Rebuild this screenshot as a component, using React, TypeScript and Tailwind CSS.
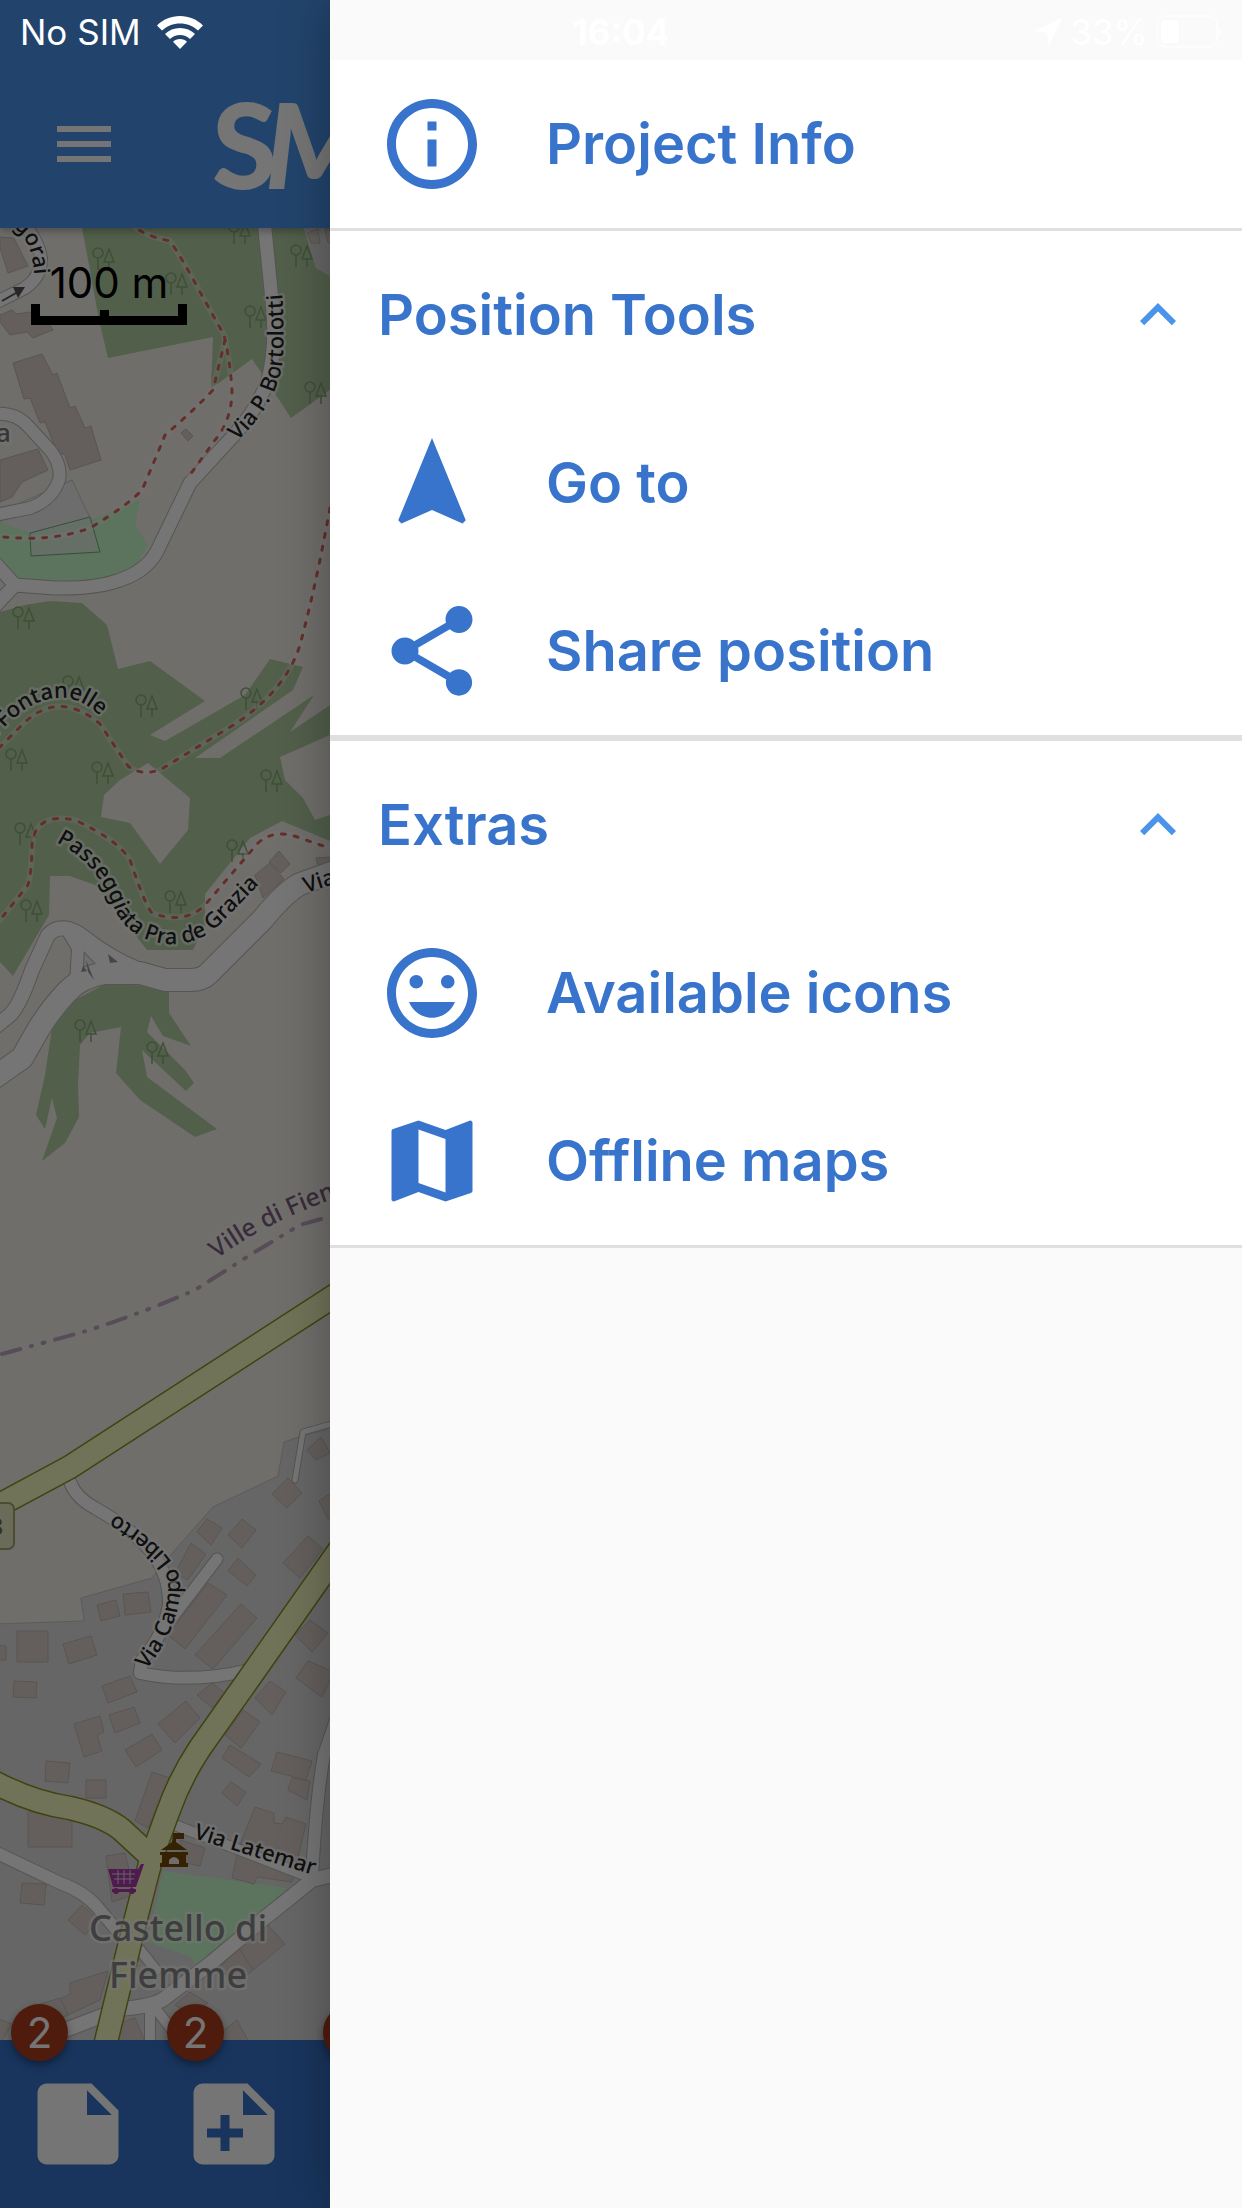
import { useState } from "react";
import type { ReactNode } from "react";
import type { IconType } from "react-icons";
import {
  MdExpandLess,
  MdExpandMore,
  MdInfoOutline,
  MdMap,
  MdMenu,
  MdMood,
  MdNavigation,
  MdShare,
} from "react-icons/md";

const forests = [
  "82,228 90,270 99,320 108,358 213,337 211,388 216,385 252,359 265,378 291,418 330,390 380,350 380,300 316,268 304,228",
  "0,612 25,605 50,601 82,603 107,625 118,669 150,661 205,701 150,735 165,741 245,695 270,659 303,667 293,690 195,758 220,758 314,695 290,732 330,705 330,735 280,757 285,780 303,798 315,820 330,815 330,841 282,821 250,838 205,894 205,925 193,950 147,950 125,922 95,885 70,876 50,876 49,915 13,976 0,962",
  "52,1028 75,1000 105,984 150,986 169,991 169,1013 191,1046 163,1036 151,1016 147,1032 185,1070 194,1083 186,1091 142,1050 147,1077 217,1129 195,1137 140,1100 116,1073 121,1027 90,1033 80,1045 78,1085 79,1117 65,1143 42,1161 57,1118 52,1098 45,1129 36,1115 45,1075",
];

const buildings = [
  "13,363 42,354 53,375 57,373 70,408 75,406 85,428 91,426 101,460 70,470 65,455 57,452 45,422 40,423 30,398 24,399",
  "0,237 14,238 28,266 8,273 0,248",
  "0,315 12,310 17,314 30,312 35,320 45,318 53,330 33,338 27,332 10,335 0,322",
  "0,460 38,449 48,470 22,482 12,497 0,502",
  "181,433 186,429 193,436 188,441",
  "307,233 318,229 320,243 311,243",
  "325,229 340,229 340,243 328,243",
  "255,875 270,863 284,879 263,898",
  "269,862 279,851 290,864 281,873",
  "316,858 330,857 330,863 318,866",
  "17,1631 48,1631 48,1662 17,1662",
  "63,1644 91,1636 97,1655 69,1664",
  "97,1605 116,1600 120,1616 101,1621",
  "123,1594 148,1592 151,1612 125,1615",
  "-4,1645 6,1646 6,1660 -4,1660",
  "14,1681 37,1682 36,1698 13,1697",
  "102,1686 130,1676 137,1692 108,1703",
  "109,1715 134,1707 140,1723 115,1733",
  "74,1724 100,1716 104,1732 97,1735 102,1751 84,1757",
  "125,1750 152,1734 162,1750 136,1767",
  "46,1761 70,1763 68,1783 45,1781",
  "86,1780 106,1780 106,1798 86,1798",
  "158,1724 186,1701 200,1718 175,1743",
  "197,1695 212,1683 225,1693 212,1708",
  "152,1772 170,1778 148,1828 135,1821",
  "168,1635 208,1583 227,1595 185,1649",
  "195,1655 241,1604 257,1618 213,1669",
  "197,1532 207,1519 222,1528 211,1545",
  "228,1535 242,1519 256,1530 242,1548",
  "175,1573 191,1543 206,1554 188,1580",
  "228,1571 238,1558 256,1575 247,1586",
  "283,1563 308,1536 323,1549 300,1578",
  "272,1494 288,1478 302,1493 287,1508",
  "307,1450 321,1437 330,1453 316,1460",
  "319,1501 336,1490 340,1519 328,1519",
  "295,1635 310,1620 328,1633 312,1652",
  "296,1678 308,1661 334,1672 322,1697",
  "255,1698 270,1681 286,1692 272,1715",
  "225,1735 243,1710 260,1722 241,1748",
  "222,1758 230,1745 261,1764 249,1777",
  "271,1771 277,1752 312,1761 306,1780",
  "288,1790 292,1778 310,1781 307,1800",
  "222,1793 231,1782 246,1792 237,1806",
  "255,1807 274,1813 274,1823 282,1824 286,1817 306,1824 292,1882 257,1877 254,1884 232,1878 238,1850",
  "28,1812 72,1812 72,1847 28,1847",
  "106,1856 125,1853 128,1865 133,1895 112,1902",
  "22,1883 46,1884 44,1905 20,1903",
  "68,1920 82,1905 98,1920 85,1935",
  "180,1840 205,1848 200,1866 185,1863",
  "238,1947 268,1925 285,1944 253,1970",
  "218,1970 238,1947 253,1970 240,1981",
  "70,1983 108,1971 100,2000 68,2015 60,1999 70,1994",
  "40,2004 60,1998 68,2015 50,2022",
  "175,2005 190,1992 208,2003 190,2014",
  "222,2032 237,2020 250,2044 225,2044",
  "-4,2018 12,2024 0,2044",
  "122,2022 135,2018 146,2044 118,2044",
];

const streets = [
  { d: "M264 220 L272 300 Q277 345 268 380 Q258 408 235 434 L190 483 L160 545 Q150 570 120 580 Q95 589 55 588 L15 585 L-5 563 M15 585 L-5 606", width: 13 },
  { d: "M-5 414 Q15 412 28 426 L50 450 Q62 465 59 480 Q52 500 30 508 L-5 515", width: 12 },
  { d: "M-5 303 L25 288 Q42 276 41 258 Q38 240 22 222", width: 12 },
  { d: "M345 868 L300 884 Q285 892 262 920 L208 974 Q202 980 190 980 L165 980 L140 973 L105 973 Q80 977 66 993 Q50 1010 38 1030 L22 1058 L-5 1077", width: 22 },
  { d: "M140 970 Q110 958 85 938 Q62 920 48 935 L32 970 Q20 1005 10 1015 L-5 1027", width: 14 },
  { d: "M66 928 L78 948 L76 985 M74 932 L112 972", width: 12 },
  { d: "M70 1482 Q76 1498 95 1508 Q130 1528 150 1550 Q170 1575 169 1605 Q164 1635 142 1660 L140 1673 Q190 1684 250 1670", width: 12 },
  { d: "M217 1559 L172 1618", width: 11 },
  { d: "M345 1420 L303 1432 L295 1480", width: 5 },
  { d: "M-5 1852 L60 1883 Q85 1892 98 1908 L125 1940", width: 12 },
  { d: "M345 1872 L312 1880 Q280 1906 262 1920 L212 1962 L165 1998 Q155 2006 120 2009 L60 2032", width: 14 },
  { d: "M336 1720 L324 1755 Q316 1800 312 1878", width: 12 },
  { d: "M172 1824 L312 1878", width: 10 },
  { d: "M150 2005 L150 2050 M155 2008 L180 2040 M140 1950 L156 1970", width: 10 },
];

const mainRoads = [
  "M-10 1510 L70 1467 L345 1289",
  "M-10 1780 Q30 1802 70 1808 Q105 1816 122 1830 L150 1856",
  "M345 1542 L248 1680 L200 1748 Q180 1778 168 1812 L152 1856 L135 1922 L104 2050",
];

const footpaths = [
  "M130 222 Q140 235 170 241 Q182 258 200 292 L224 335 Q230 360 232 390 Q232 420 215 440 L190 475",
  "M225 340 L213 390 Q190 414 165 435 Q155 460 142 490 Q128 505 90 528 Q50 543 -5 536",
  "M330 508 L322 550 Q312 600 300 645 Q286 690 235 724 L160 770 Q140 776 128 766 L100 724 Q60 690 25 722 L-5 752",
  "M335 850 L300 838 Q275 828 258 843 L205 905 Q185 925 152 913 Q145 905 130 860 Q118 840 75 820 Q35 812 32 845 Q32 870 28 885 L-5 926",
];

const treeSpots = [
  { x: 92, y: 246 },
  { x: 228, y: 220 },
  { x: 290, y: 243 },
  { x: 165, y: 271 },
  { x: 244, y: 304 },
  { x: 304, y: 380 },
  { x: 12, y: 605 },
  { x: 62, y: 674 },
  { x: 135, y: 693 },
  { x: 240, y: 686 },
  { x: 5, y: 747 },
  { x: 91, y: 760 },
  { x: 260, y: 768 },
  { x: 14, y: 821 },
  { x: 226, y: 838 },
  { x: 20, y: 898 },
  { x: 164, y: 889 },
  { x: 74, y: 1018 },
  { x: 146, y: 1040 },
];

const streetLabels = [
  { id: "bortolotti", text: "Via P. Bortolotti", d: "M237 441 Q276 405 282 365 Q286 330 280 270" },
  { id: "agorai", text: "gorai", d: "M13 227 Q35 240 35 290" },
  { id: "fontanelle", text: "sta Fontanelle", d: "M-19 758 Q20 698 60 698 Q88 696 120 738" },
  { id: "grazia", text: "Passeggiata Pra de Grazia", d: "M56 842 Q96 862 113 905 Q125 938 165 944 Q200 946 222 922 L275 868" },
  { id: "via", text: "Via Bolzano", d: "M306 893 L440 850" },
  { id: "campo", text: "Via Campo Liberto", d: "M146 1670 Q182 1625 180 1580 Q172 1544 90 1500" },
  { id: "latemar", text: "Via Latemar", d: "M193 1838 L330 1880" },
];

function TreePair({ x, y }: { x: number; y: number }) {
  return (
    <g transform={`translate(${x} ${y})`} fill="none" stroke="#87ad79" strokeWidth="1.5">
      <circle cx="6" cy="7" r="5" />
      <path d="M6 12v12M17 3l-5 13h10zM17 16v8" />
    </g>
  );
}

function MapCanvas() {
  return (
    <svg
      aria-label="Map of Castello di Fiemme"
      className="absolute inset-0 size-full"
      preserveAspectRatio="xMinYMin slice"
      role="img"
      viewBox="0 228 1242 1812"
    >
      <rect width="1242" height="1812" y="228" fill="#f2efe9" />
      <polygon
        points="-5,1624 84,1621 81,1598 152,1578 175,1550 213,1507 278,1476 284,1442 302,1436 345,1425 345,2050 -5,2050"
        fill="#e0dfdf"
        stroke="#c8c6c4"
      />
      {forests.map((points) => (
        <polygon key={points} points={points} fill="#b2cfa3" />
      ))}
      <polygon points="304,228 310,245 316,268 345,285 345,228" fill="#e0dfdf" />
      <polygon points="148,763 190,798 188,830 160,864 130,823 101,817 104,795 120,780" fill="#f2efe9" />
      <polygon points="0,512 72,480 90,518 30,535 10,530 0,522" fill="#eeeeee" stroke="#c8c6c4" />
      <polygon points="0,522 30,533 90,520 140,500 135,525 148,545 130,577 85,585 20,580 0,560" fill="#c8facc" />
      <polygon points="30,533 90,517 100,552 31,556" fill="#dff2df" stroke="#6fae7e" />
      <polygon points="163,1871 287,1888 262,1912 196,1965 190,1956 148,1942" fill="#c8facc" />
      {treeSpots.map((spot) => (
        <TreePair key={`${spot.x}-${spot.y}`} {...spot} />
      ))}

      <g fill="#d9d0c9" stroke="#c3b9b0">
        {buildings.map((points) => (
          <polygon key={points} points={points} />
        ))}
      </g>

      <g fill="none" strokeLinecap="round" strokeLinejoin="round">
        {streets.map((street) => (
          <path key={street.d} d={street.d} stroke="#b9b7b4" strokeWidth={street.width + 2} />
        ))}
        {streets.map((street) => (
          <path key={street.d} d={street.d} stroke="#fefefe" strokeWidth={street.width} />
        ))}
        {mainRoads.map((d) => (
          <path key={d} d={d} stroke="#8b9323" strokeWidth="25" />
        ))}
        {mainRoads.map((d) => (
          <path key={d} d={d} stroke="#f7fabf" strokeWidth="22" />
        ))}
        {footpaths.map((d) => (
          <path key={d} d={d} stroke="#ffffff" strokeOpacity="0.3" strokeWidth="6" />
        ))}
        {footpaths.map((d) => (
          <path key={d} d={d} stroke="#d9685c" strokeDasharray="4 9" strokeWidth="3" />
        ))}
        <path
          d="M2 1354 L83 1332 Q140 1314 195 1290 L250 1255 L300 1225 L335 1215"
          stroke="#bda6bd"
          strokeDasharray="19 11 1 11 2 11"
          strokeWidth="4"
        />
      </g>

      <path d="M2 301 L16 293" stroke="#555555" strokeWidth="2" />
      <path d="M13 287 L25 287 L18 298z" fill="#555555" />
      <g fill="#999999">
        <path d="M86 960l8 20-6-8z" />
        <path d="M108 954l10 8-8 1zM83 966l4 5-6 1z" />
      </g>

      <rect x="-40" y="1503" width="54" height="46" rx="6" fill="#e8ebc3" stroke="#a3a66e" strokeWidth="2" />
      <text
        x="3"
        y="1535"
        textAnchor="end"
        fill="#6d7040"
        fontFamily="Noto Sans, sans-serif"
        fontSize="24"
        fontWeight="700"
      >
        SS48
      </text>

      <g fill="#ac39ac">
        <path d="M108 1869h30l3-5h3l-8 23h-23z" />
        <path d="M112 1889h24v3h-24z" />
        <circle cx="116" cy="1891" r="3" />
        <circle cx="132" cy="1891" r="3" />
        <path d="M112 1874h23M114 1879h20M118 1870v14M124 1870v14M130 1870v14" stroke="#e0dfdf" />
      </g>
      <g fill="#734a08">
        <path d="M173 1833h11v6h-8v3l11 8h-26l11-8zM160 1852h28v3h-2v8h2v4h-28v-4h2v-8h-2z" />
        <path d="M169 1864v-4q5-6 10 0v4z" fill="#f2efe9" />
      </g>

      <g
        fontFamily="Noto Sans, sans-serif"
        fontWeight="500"
        stroke="#ffffff"
        strokeLinejoin="round"
        strokeOpacity="0.6"
        strokeWidth="5"
        style={{ paintOrder: "stroke" }}
      >
        {streetLabels.map((label) => (
          <g key={label.id}>
            <path d={label.d} id={label.id} fill="none" stroke="none" />
            <text fill="#222222" fontSize="22">
              <textPath href={`#${label.id}`}>{label.text}</textPath>
            </text>
          </g>
        ))}
        <path d="M217 1259 Q265 1222 345 1195" id="ville" fill="none" stroke="none" />
        <text fill="#7d5f80" fontSize="25" strokeOpacity="0.2">
          <textPath href="#ville">Ville di Fiemme</textPath>
        </text>
        <text x="11" y="442" fill="#777777" fontSize="26" textAnchor="end">
          Cavada
        </text>
        <text fill="#888888" fontSize="36" textAnchor="middle">
          <tspan x="178" y="1941">Castello di</tspan>
          <tspan x="178" y="1988">Fiemme</tspan>
        </text>
      </g>
    </svg>
  );
}

function ScaleBar() {
  return (
    <div className="absolute left-[31px] top-[34px] flex w-[156px] flex-col items-center text-black">
      <span className="text-[42px] leading-[42px]">100 m</span>
      <svg aria-hidden="true" className="h-[21px] w-full" viewBox="0 0 156 21">
        <path d="M0 0h9v12h60v-6h9v6h69v-12h9v21h-156z" />
      </svg>
    </div>
  );
}

function NoteIcon({ plus }: { plus?: boolean }) {
  return (
    <svg aria-hidden="true" className="size-27" fill="currentColor" viewBox="0 0 24 24">
      <path
        d={`M14 10V4.5L19.5 10zM5 3a2 2 0 0 0-2 2v14a2 2 0 0 0 2 2h14a2 2 0 0 0 2-2V9l-6-6z${
          plus ? "M9 10h2v3h3v2h-3v3H9v-3H6v-2h3z" : ""
        }`}
        fillRule="evenodd"
      />
    </svg>
  );
}

function NoteButton({ label, count, plus }: { label: string; count: number; plus?: boolean }) {
  return (
    <button aria-label={label} className="relative flex h-full w-39 shrink-0 items-center justify-center" type="button">
      <NoteIcon plus={plus} />
      <span className="absolute -top-9 left-[11px] flex size-[57px] items-center justify-center rounded-full bg-[#ac3b1c] text-[42px] leading-none shadow-[0_4px_8px_rgba(0,0,0,0.4)]">
        {count}
      </span>
    </button>
  );
}

function StatusBar() {
  return (
    <div className="absolute inset-x-0 top-0 z-30 grid h-16 grid-cols-3 items-center px-5 text-[35px] leading-10 text-white">
      <div className="flex items-center gap-4">
        <span>No SIM</span>
        <svg aria-label="Wi-Fi" className="h-[33px] w-[46px]" fill="currentColor" viewBox="0 0 46 33">
          <path d="M23 0C14 0 6 3.500 0 9.500l5 5C10 10 16 7.500 23 7.500S36 10 41 14.500l5-5C40 3.500 32 0 23 0z" />
          <path d="M23 12c-6 0-11 2.300-15 6l5 5c3-2.500 6-4 10-4s7 1.500 10 4l5-5c-4-3.700-9-6-15-6z" />
          <path d="M23 23c-3 0-5 1-7 2.700L23 33l7-7.300C28 24 26 23 23 23z" />
        </svg>
      </div>
      <span className="text-center font-bold">16:04</span>
      <div className="flex items-center justify-end gap-2">
        <svg aria-hidden="true" className="size-7" fill="currentColor" viewBox="0 0 28 28">
          <path d="M28 0L15 28l-2-13L0 13z" />
        </svg>
        <span>33%</span>
        <svg aria-hidden="true" className="h-[34px] w-[66px]" viewBox="0 0 66 34">
          <rect x="1" y="1" width="60" height="31" rx="8" fill="none" stroke="#ffffff" strokeOpacity="0.5" strokeWidth="2" />
          <rect x="5" y="5" width="18" height="23" rx="4" fill="#ffffff" />
          <path d="M63 12q5 5 0 10z" fill="#ffffff" fillOpacity="0.5" />
        </svg>
      </div>
    </div>
  );
}

function DrawerItem({ icon: Icon, label }: { icon: IconType; label: string }) {
  return (
    <button className="flex h-42 w-full items-center gap-15 bg-white px-12 text-left" type="button">
      <Icon className="shrink-0" size={108} />
      <span>{label}</span>
    </button>
  );
}

function DrawerSection({ title, children }: { title: string; children: ReactNode }) {
  const [open, setOpen] = useState(true);
  const Chevron = open ? MdExpandLess : MdExpandMore;

  return (
    <section className="border-y-3 border-[#e0e0e0] bg-white">
      <button
        aria-expanded={open}
        className="flex h-42 w-full items-center justify-between px-12 text-left"
        onClick={() => setOpen((prev) => !prev)}
        type="button"
      >
        <span>{title}</span>
        <Chevron className="text-[#4a94ec]" size={72} />
      </button>
      {open ? children : null}
    </section>
  );
}

export default function App() {
  return (
    <div className="relative flex min-h-screen flex-col overflow-hidden font-['Inter',sans-serif]">
      <StatusBar />

      <header className="relative z-10 flex h-57 items-center gap-23 bg-[#4a94eb] pl-12 pt-15 text-white shadow-[0_3px_8px_rgba(0,0,0,0.3)]">
        <button aria-label="Open menu" type="button">
          <MdMenu size={72} />
        </button>
        <div className="flex -space-x-3 font-['Lato',sans-serif] text-[118px] font-black leading-none">
          <span>S</span>
          <i>MASH</i>
        </div>
      </header>

      <main className="relative flex-1 overflow-hidden bg-[#f2efe9]">
        <MapCanvas />
        <ScaleBar />
      </main>

      <nav className="relative flex h-42 bg-[#3773cb] text-white">
        <NoteButton count={2} label="Simple notes" />
        <NoteButton count={2} label="Form notes" plus />
        <NoteButton count={2} label="Logs" />
      </nav>

      <div className="absolute inset-0 z-20 flex bg-black/54">
        <div className="w-[330px] shrink-0" />
        <aside className="flex-1 bg-[#fafafa] pt-15 text-[56px] font-semibold leading-17 text-[#3874cb] shadow-[0_0_48px_rgba(0,0,0,0.3)]">
          <DrawerItem icon={MdInfoOutline} label="Project Info" />
          <DrawerSection title="Position Tools">
            <DrawerItem icon={MdNavigation} label="Go to" />
            <DrawerItem icon={MdShare} label="Share position" />
          </DrawerSection>
          <DrawerSection title="Extras">
            <DrawerItem icon={MdMood} label="Available icons" />
            <DrawerItem icon={MdMap} label="Offline maps" />
          </DrawerSection>
        </aside>
      </div>
    </div>
  );
}
